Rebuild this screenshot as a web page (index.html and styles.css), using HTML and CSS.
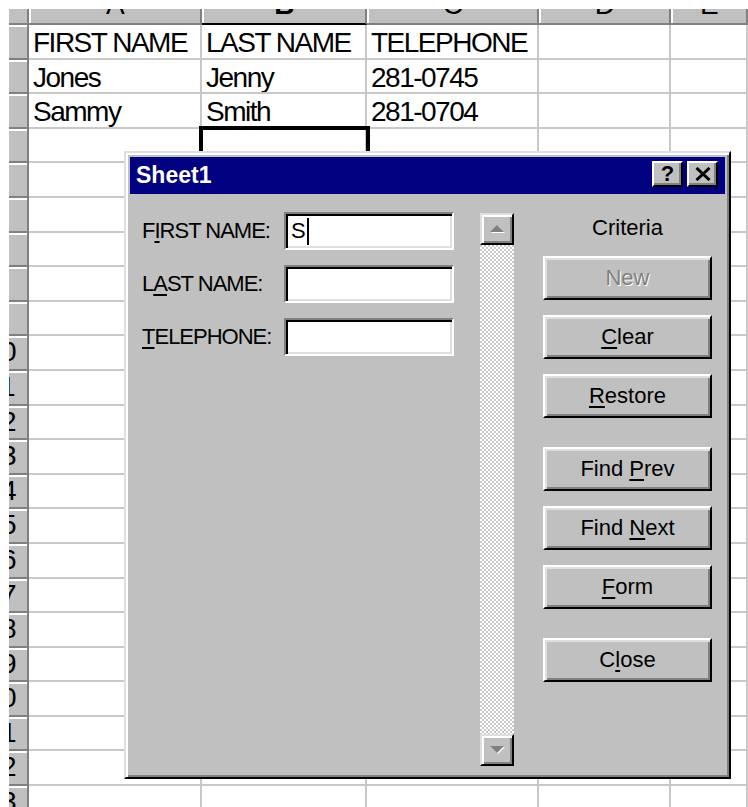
FILE: index.html
```html
<!DOCTYPE html>
<html lang="en">
<head>
<meta charset="utf-8">
<title>Book1 - Data Form</title>
<link rel="stylesheet" href="styles.css">
</head>
<body>
<div class="sheet">
  <div class="corner"></div>
  <div class="colhead"><span>A</span></div>
  <div class="colhead active"><span>B</span></div>
  <div class="colhead"><span>C</span></div>
  <div class="colhead"><span>D</span></div>
  <div class="colhead"><span>E</span></div>

  <div class="rowhead"><span>1</span></div>
  <div class="cell">FIRST NAME</div><div class="cell">LAST NAME</div><div class="cell">TELEPHONE</div><div class="cell"></div><div class="cell"></div>
  <div class="rowhead"><span>2</span></div>
  <div class="cell">Jones</div><div class="cell">Jenny</div><div class="cell">281-0745</div><div class="cell"></div><div class="cell"></div>
  <div class="rowhead"><span>3</span></div>
  <div class="cell">Sammy</div><div class="cell">Smith</div><div class="cell">281-0704</div><div class="cell"></div><div class="cell"></div>
  <div class="rowhead"><span>4</span></div>
  <div class="cell"></div><div class="cell current"></div><div class="cell"></div><div class="cell"></div><div class="cell"></div>
  <div class="rowhead"><span>5</span></div>
  <div class="cell"></div><div class="cell"></div><div class="cell"></div><div class="cell"></div><div class="cell"></div>
  <div class="rowhead"><span>6</span></div>
  <div class="cell"></div><div class="cell"></div><div class="cell"></div><div class="cell"></div><div class="cell"></div>
  <div class="rowhead"><span>7</span></div>
  <div class="cell"></div><div class="cell"></div><div class="cell"></div><div class="cell"></div><div class="cell"></div>
  <div class="rowhead"><span>8</span></div>
  <div class="cell"></div><div class="cell"></div><div class="cell"></div><div class="cell"></div><div class="cell"></div>
  <div class="rowhead"><span>9</span></div>
  <div class="cell"></div><div class="cell"></div><div class="cell"></div><div class="cell"></div><div class="cell"></div>
  <div class="rowhead"><span>10</span></div>
  <div class="cell"></div><div class="cell"></div><div class="cell"></div><div class="cell"></div><div class="cell"></div>
  <div class="rowhead"><span>11</span></div>
  <div class="cell"></div><div class="cell"></div><div class="cell"></div><div class="cell"></div><div class="cell"></div>
  <div class="rowhead"><span>12</span></div>
  <div class="cell"></div><div class="cell"></div><div class="cell"></div><div class="cell"></div><div class="cell"></div>
  <div class="rowhead"><span>13</span></div>
  <div class="cell"></div><div class="cell"></div><div class="cell"></div><div class="cell"></div><div class="cell"></div>
  <div class="rowhead"><span>14</span></div>
  <div class="cell"></div><div class="cell"></div><div class="cell"></div><div class="cell"></div><div class="cell"></div>
  <div class="rowhead"><span>15</span></div>
  <div class="cell"></div><div class="cell"></div><div class="cell"></div><div class="cell"></div><div class="cell"></div>
  <div class="rowhead"><span>16</span></div>
  <div class="cell"></div><div class="cell"></div><div class="cell"></div><div class="cell"></div><div class="cell"></div>
  <div class="rowhead"><span>17</span></div>
  <div class="cell"></div><div class="cell"></div><div class="cell"></div><div class="cell"></div><div class="cell"></div>
  <div class="rowhead"><span>18</span></div>
  <div class="cell"></div><div class="cell"></div><div class="cell"></div><div class="cell"></div><div class="cell"></div>
  <div class="rowhead"><span>19</span></div>
  <div class="cell"></div><div class="cell"></div><div class="cell"></div><div class="cell"></div><div class="cell"></div>
  <div class="rowhead"><span>20</span></div>
  <div class="cell"></div><div class="cell"></div><div class="cell"></div><div class="cell"></div><div class="cell"></div>
  <div class="rowhead"><span>21</span></div>
  <div class="cell"></div><div class="cell"></div><div class="cell"></div><div class="cell"></div><div class="cell"></div>
  <div class="rowhead"><span>22</span></div>
  <div class="cell"></div><div class="cell"></div><div class="cell"></div><div class="cell"></div><div class="cell"></div>
  <div class="rowhead"><span>23</span></div>
  <div class="cell"></div><div class="cell"></div><div class="cell"></div><div class="cell"></div><div class="cell"></div>
</div>

<div class="dialog">
  <div class="titlebar">
    <span class="title">Sheet1</span>
    <div class="tbuttons">
      <div class="tbtn">?</div>
      <div class="tbtn">
        <svg width="16" height="14" viewBox="0 0 16 14"><path d="M1.5 1 L14.5 13 M14.5 1 L1.5 13" stroke="#000" stroke-width="3" fill="none"/></svg>
      </div>
    </div>
  </div>

  <div class="dlgbody">
    <div class="fields">
      <div class="field"><label>F<u>I</u>RST NAME:</label><div class="input"><span>S</span><i class="caret"></i></div></div>
      <div class="field"><label>L<u>A</u>ST NAME:</label><div class="input"></div></div>
      <div class="field"><label><u>T</u>ELEPHONE:</label><div class="input"></div></div>
    </div>

    <div class="scroll">
      <div class="sbtn">
        <svg width="18" height="11" viewBox="0 0 18 11"><polygon points="10,2 17,9 3,9" fill="#fff"/><polygon points="9,1 16,8 2,8" fill="#808080"/></svg>
      </div>
      <div class="track"></div>
      <div class="sbtn">
        <svg width="18" height="11" viewBox="0 0 18 11"><polygon points="3,2 17,2 10,9" fill="#fff"/><polygon points="2,1 16,1 9,8" fill="#808080"/></svg>
      </div>
    </div>

    <div class="actions">
      <div class="criteria">Criteria</div>
      <button class="btn" disabled>New</button>
      <button class="btn"><u>C</u>lear</button>
      <button class="btn"><u>R</u>estore</button>
      <button class="btn sep">Find <u>P</u>rev</button>
      <button class="btn">Find <u>N</u>ext</button>
      <button class="btn"><u>F</u>orm</button>
      <button class="btn sep">C<u>l</u>ose</button>
    </div>
  </div>
</div>
</body>
</html>
```

FILE: styles.css
```css
html, body {
  margin: 0;
  overflow: hidden;
  background: #fff;
}

body {
  position: relative;
  box-sizing: border-box;
  width: 748px;
  height: 807px;
  padding: 9px 0 0 9px;
  font-family: "Liberation Sans", Arial, sans-serif;
  color: #000;
}

/* worksheet grid */
.sheet {
  height: 798px;
  overflow: hidden;
  display: grid;
  grid-template-columns: 20px 173px 165px 172px 132px 1fr;
  grid-template-rows: 16px;
  grid-auto-rows: 34.6px;
  font-size: 28px;
  letter-spacing: -1.5px;
}

.corner,
.colhead,
.rowhead {
  box-sizing: border-box;
  background: #c0c0c0;
  border-right: 2px solid #808080;
  border-bottom: 2px solid #808080;
  overflow: hidden;
}

.colhead {
  box-shadow: inset 2px 0 #fff;
  text-align: center;
}

.colhead span {
  display: block;
  line-height: 16px;
  margin-top: -12px;
}

.colhead.active {
  font-weight: bold;
  border-bottom-color: #000;
}

.rowhead {
  box-shadow: inset 0 2px #fff;
}

.rowhead span {
  display: block;
  width: 54px;
  margin-left: -35px;
  text-align: center;
  line-height: 32px;
}

.cell {
  box-sizing: border-box;
  border-right: 2px solid #c8c8c8;
  border-bottom: 2px solid #c8c8c8;
  padding: 2px 0 0 4px;
  line-height: 32px;
  white-space: nowrap;
  overflow: hidden;
}

.cell.current {
  position: relative;
  z-index: 1;
  overflow: visible;
  outline: 4px solid #000;
  outline-offset: -1px;
}

/* data form window */
.dialog {
  position: absolute;
  left: 124px;
  top: 151px;
  z-index: 2;
  width: 607px;
  height: 628px;
  box-sizing: border-box;
  background: #c0c0c0;
  border: 2px solid;
  border-color: #dfdfdf #000 #000 #dfdfdf;
  box-shadow: inset 2px 2px #fff, inset -2px -2px #808080;
  padding: 4px;
  display: flex;
  flex-direction: column;
  font-size: 22px;
}

.titlebar {
  flex: none;
  height: 37px;
  background: #000080;
  display: flex;
  align-items: center;
  padding: 0 7px 0 6px;
}

.title {
  flex: 1;
  color: #fff;
  font-weight: bold;
  font-size: 23px;
}

.tbuttons {
  align-self: flex-start;
  margin-top: 4px;
  display: flex;
  gap: 4px;
}

.tbtn {
  width: 31px;
  height: 26px;
  box-sizing: border-box;
  background: #c0c0c0;
  border: 2px solid;
  border-color: #fff #000 #000 #fff;
  box-shadow: inset -2px -2px #808080;
  display: flex;
  align-items: center;
  justify-content: center;
  font-weight: bold;
  font-size: 22px;
  line-height: 1;
}

.dlgbody {
  flex: 1;
  display: flex;
  padding: 18px 13px 7px 12px;
}

.fields {
  width: 312px;
  display: flex;
  flex-direction: column;
  gap: 15px;
}

.field {
  height: 38px;
  display: flex;
  align-items: center;
}

.field label {
  width: 142px;
  letter-spacing: -1px;
}

u {
  text-decoration-thickness: 2px;
  text-underline-offset: 3px;
}

.input {
  width: 170px;
  height: 38px;
  box-sizing: border-box;
  background: #fff;
  border: 2px solid;
  border-color: #808080 #fff #fff #808080;
  box-shadow: inset 2px 2px #000, inset -2px -2px #dfdfdf;
  display: flex;
  align-items: center;
  padding-left: 5px;
}

.caret {
  display: block;
  width: 2px;
  height: 27px;
  margin-left: 1px;
  background: #000;
}

/* 2px checker track */
.scroll {
  width: 34px;
  margin: 1px 0 0 26px;
  display: flex;
  flex-direction: column;
  background-color: #fff;
  background-image: conic-gradient(#fff 0 25%, #c8c8c8 0 50%, #fff 0 75%, #c8c8c8 0);
  background-size: 4px 4px;
}

.sbtn {
  flex: none;
  height: 32px;
  box-sizing: border-box;
  background: #c0c0c0;
  border: 2px solid;
  border-color: #dfdfdf #000 #000 #dfdfdf;
  box-shadow: inset 2px 2px #fff, inset -2px -2px #808080;
  display: flex;
  align-items: center;
  justify-content: center;
}

.track {
  flex: 1;
}

.actions {
  width: 169px;
  margin-left: 29px;
  display: flex;
  flex-direction: column;
  gap: 15px;
}

.criteria {
  height: 32px;
  line-height: 32px;
  text-align: center;
  margin-bottom: -3px;
}

.btn {
  height: 44px;
  box-sizing: border-box;
  margin: 0;
  padding: 0;
  font: inherit;
  color: #000;
  background: #c0c0c0;
  border: 2px solid;
  border-color: #fff #000 #000 #fff;
  box-shadow: inset 2px 2px #dfdfdf, inset -2px -2px #808080;
}

.btn:disabled {
  color: #808080;
  text-shadow: 1px 1px #fff;
}

.btn.sep {
  margin-top: 14px;
}
```
